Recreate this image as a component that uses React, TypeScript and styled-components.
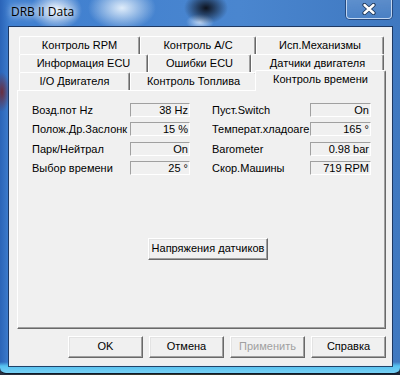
import React from "react";
import styled, { createGlobalStyle } from "styled-components";

const GlobalStyle = createGlobalStyle`
  html, body { margin: 0; padding: 0; }
  body {
    width: 400px;
    height: 375px;
    overflow: hidden;
    background: #1c2433;
    font-family: "Liberation Sans", Arial, sans-serif;
  }
`;

const Desktop = styled.div`
  width: 400px;
  height: 375px;
  overflow: hidden;
  background: linear-gradient(90deg, #2a3140 0%, #3a3a2a 40%, #1e2534 100%);
`;

const Window = styled.div`
  width: 400px;
  height: 374px;
  box-sizing: border-box;
  padding: 0 8px 7px 9px;
  display: flex;
  flex-direction: column;
  border-radius: 0 0 6px 6px;
  border-bottom: 1px solid #0e1a2a;
  background:
    radial-gradient(ellipse 22px 16px at 206px 8px, rgba(10, 12, 20, 0.95), rgba(10, 12, 20, 0) 100%),
    radial-gradient(ellipse 14px 8px at 200px 22px, rgba(220, 235, 255, 0.8), rgba(220, 235, 255, 0) 100%),
    radial-gradient(ellipse 26px 20px at 56px 10px, rgba(245, 250, 255, 0.95), rgba(200, 225, 250, 0) 100%),
    radial-gradient(ellipse 34px 22px at 122px 8px, rgba(240, 248, 255, 0.9), rgba(200, 225, 250, 0) 100%),
    radial-gradient(ellipse 8px 20px at 2px 92px, rgba(120, 30, 30, 0.8), rgba(120, 30, 30, 0) 100%),
    linear-gradient(180deg, rgba(0, 0, 0, 0) 0px, rgba(0, 0, 0, 0) 362px, #56c2f0 366px, #7ed2f4 374px),
    linear-gradient(90deg, #2a64b8 0px, #3f7fd0 10px, #4a86cf 60%, #3f78c0 100%);
`;

const TitleBar = styled.div`
  height: 27px;
  display: flex;
  align-items: flex-start;
  justify-content: space-between;
`;

const Title = styled.div`
  font-family: "Open Sans", "Noto Sans", sans-serif;
  font-size: 12px;
  line-height: 14px;
  color: #000;
  padding: 5px 0 0 2px;
  text-shadow: 0 0 6px rgba(255, 255, 255, 0.95), 0 0 10px rgba(255, 255, 255, 0.8);
`;

const CloseButton = styled.div`
  width: 46px;
  height: 19px;
  box-sizing: border-box;
  margin-right: 0px;
  display: flex;
  align-items: center;
  justify-content: center;
  border: 1px solid rgba(230, 240, 255, 0.75);
  border-top: none;
  border-radius: 0 0 4px 4px;
  box-shadow: 0 0 0 1px rgba(20, 40, 80, 0.6);
  background: linear-gradient(180deg, rgba(255, 255, 255, 0.15), rgba(255, 255, 255, 0.05));
`;

const Client = styled.div`
  flex: 1;
  box-sizing: border-box;
  background: #f0f0f0;
  border: 1px solid #e8eef6;
  box-shadow: 0 0 0 1px rgba(25, 45, 80, 0.85);
  padding: 8px 0 0 7px;
  display: flex;
  flex-direction: column;
`;

const TabControl = styled.div`
  width: 369px;
  display: flex;
  flex-direction: column;
`;

const TabRow = styled.div<{ $offset: number }>`
  display: flex;
  height: 18px;
  padding-left: ${(p) => p.$offset}px;
`;

const Tab = styled.div<{ $w: number; $active?: boolean }>`
  width: ${(p) => p.$w}px;
  height: ${(p) => (p.$active ? 21 : 18)}px;
  margin-top: ${(p) => (p.$active ? -2 : 0)}px;
  margin-left: ${(p) => (p.$active ? -2 : 0)}px;
  position: relative;
  z-index: ${(p) => (p.$active ? 2 : 1)};
  box-sizing: border-box;
  flex: none;
  background: #f0f0f0;
  border-top: 1px solid #ffffff;
  border-left: 1px solid #ffffff;
  border-right: 1px solid #696969;
  border-radius: 2px 2px 0 0;
  box-shadow: inset -1px 0 0 #a0a0a0;
  font-size: 11px;
  line-height: ${(p) => (p.$active ? 16 : 16)}px;
  text-align: center;
  white-space: nowrap;
  color: #000;
`;

const Panel = styled.div`
  width: 369px;
  height: 239px;
  box-sizing: border-box;
  background: #f0f0f0;
  border-top: 1px solid #ffffff;
  border-left: 1px solid #ffffff;
  border-right: 1px solid #696969;
  border-bottom: 1px solid #696969;
  box-shadow: inset -1px -1px 0 #a0a0a0;
  padding: 12px 0 0 14px;
  display: flex;
  flex-direction: column;
  align-items: flex-start;
`;

const FieldGrid = styled.div`
  display: grid;
  grid-template-columns: 98px 60px 22px 98px 61px;
  grid-auto-rows: 14px;
  row-gap: 5.4px;
`;

const Label = styled.div<{ $col: number }>`
  grid-column: ${(p) => p.$col};
  font-size: 11px;
  line-height: 14px;
  color: #000;
  white-space: nowrap;
  overflow: hidden;
`;

const ValueBox = styled.div<{ $col: number }>`
  grid-column: ${(p) => p.$col};
  box-sizing: border-box;
  height: 14px;
  border-top: 1px solid #a0a0a0;
  border-left: 1px solid #a0a0a0;
  border-bottom: 1px solid #ffffff;
  border-right: 1px solid #ffffff;
  padding-right: 1px;
  font-size: 11px;
  line-height: 12px;
  text-align: right;
  white-space: nowrap;
  color: #000;
`;

const Button = styled.div<{ $w: number; $disabled?: boolean }>`
  width: ${(p) => p.$w}px;
  height: 22px;
  box-sizing: border-box;
  background: #f0f0f0;
  border: 1px solid;
  border-color: #ffffff #696969 #696969 #ffffff;
  box-shadow: inset -1px -1px 0 #a0a0a0, inset 1px 1px 0 #e3e3e3;
  font-size: 11px;
  line-height: 19px;
  text-align: center;
  white-space: nowrap;
  color: ${(p) => (p.$disabled ? "#a0a0a0" : "#000")};
`;

const ActionButton = styled(Button)`
  margin: 63px 0 0 116px;
`;

const ButtonBar = styled.div`
  display: flex;
  justify-content: flex-end;
  gap: 6px;
  padding: 7px 5px 0 0;
`;

const rows: { offset: number; tabs: { label: string; w: number; active?: boolean }[] }[] = [
  {
    offset: 2,
    tabs: [
      { label: "Контроль RPM", w: 121 },
      { label: "Контроль A/C", w: 116 },
      { label: "Исп.Механизмы", w: 128 },
    ],
  },
  {
    offset: 2,
    tabs: [
      { label: "Информация ECU", w: 129 },
      { label: "Ошибки ECU", w: 103 },
      { label: "Датчики двигателя", w: 133 },
    ],
  },
  {
    offset: 2,
    tabs: [
      { label: "I/O Двигателя", w: 111 },
      { label: "Контроль Топлива", w: 127 },
      { label: "Контроль времени", w: 131, active: true },
    ],
  },
];

const fields: [string, string, string, string][] = [
  ["Возд.пот Hz", "38 Hz", "Пуст.Switch", "On"],
  ["Полож.Др.Заслонк", "15 %", "Температ.хладоаге", "165 °"],
  ["Парк/Нейтрал", "On", "Barometer", "0.98 bar"],
  ["Выбор времени", "25 °", "Скор.Машины", "719 RPM"],
];

export default function App() {
  return (
    <Desktop>
      <GlobalStyle />
      <Window>
        <TitleBar>
          <Title>DRB II Data</Title>
          <CloseButton>
            <svg width="14" height="12" viewBox="0 0 14 12">
              <path d="M2.5 2 L11.5 10 M11.5 2 L2.5 10" stroke="#1d3557" strokeWidth="4.2" strokeLinecap="round" />
              <path d="M2.5 2 L11.5 10 M11.5 2 L2.5 10" stroke="#ffffff" strokeWidth="2.4" strokeLinecap="round" />
            </svg>
          </CloseButton>
        </TitleBar>
        <Client>
          <TabControl>
            {rows.map((r, i) => (
              <TabRow key={i} $offset={r.offset}>
                {r.tabs.map((t) => (
                  <Tab key={t.label} $w={t.w} $active={t.active}>
                    {t.label}
                  </Tab>
                ))}
              </TabRow>
            ))}
            <Panel>
              <FieldGrid>
                {fields.map(([l1, v1, l2, v2]) => (
                  <React.Fragment key={l1}>
                    <Label $col={1}>{l1}</Label>
                    <ValueBox $col={2}>{v1}</ValueBox>
                    <Label $col={4}>{l2}</Label>
                    <ValueBox $col={5}>{v2}</ValueBox>
                  </React.Fragment>
                ))}
              </FieldGrid>
              <ActionButton $w={120}>Напряжения датчиков</ActionButton>
            </Panel>
          </TabControl>
          <ButtonBar>
            <Button $w={75}>OK</Button>
            <Button $w={75}>Отмена</Button>
            <Button $w={75} $disabled>
              Применить
            </Button>
            <Button $w={75}>Справка</Button>
          </ButtonBar>
        </Client>
      </Window>
    </Desktop>
  );
}
